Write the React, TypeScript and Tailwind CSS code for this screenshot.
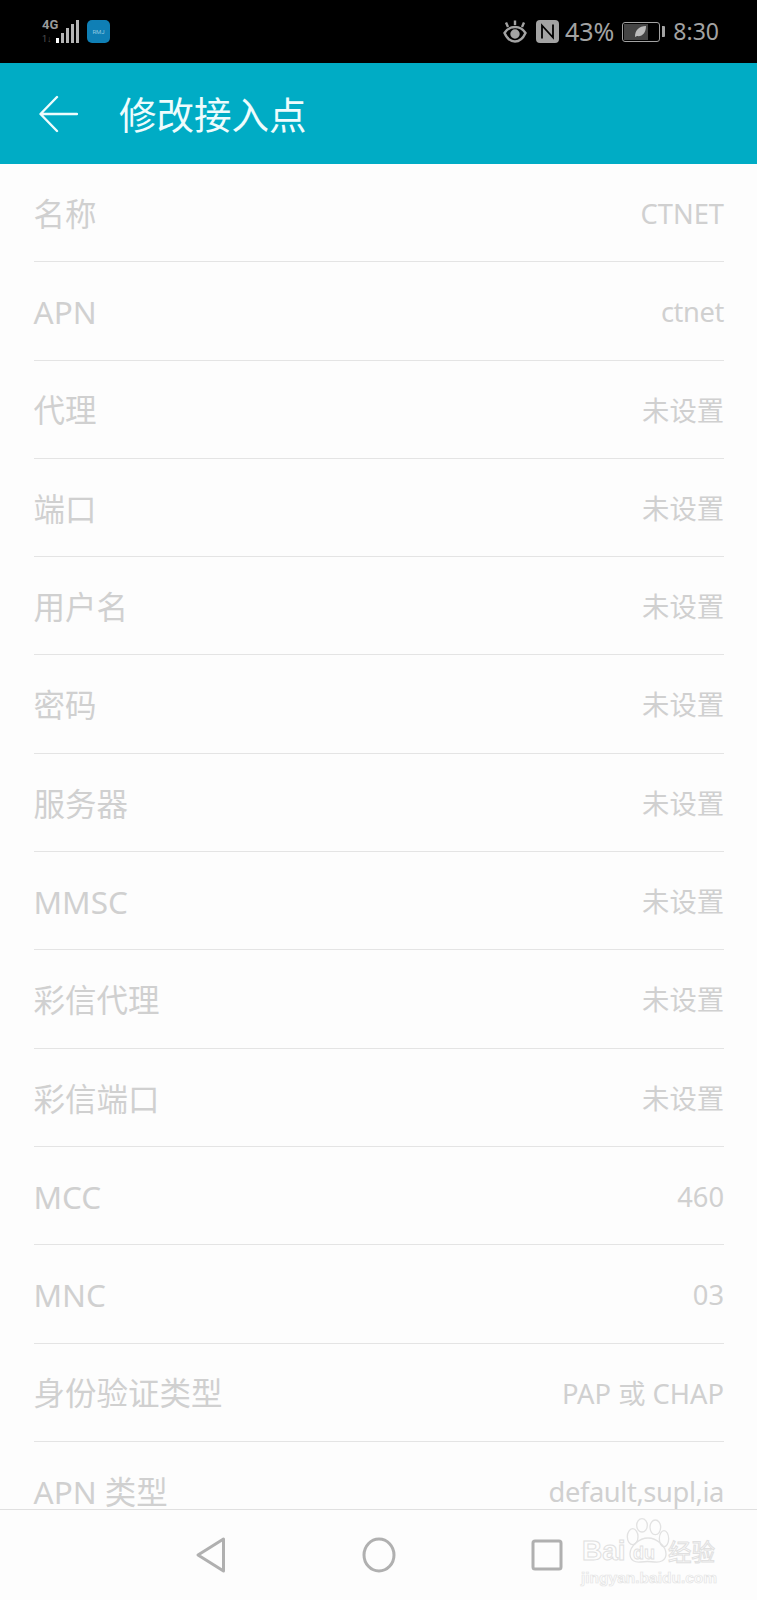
const sans = "font-['Noto_Sans','Noto_Sans_CJK_SC',sans-serif]";

const rows = [
  { label: "名称", value: "CTNET" },
  { label: "APN", value: "ctnet", tight: true },
  { label: "代理", value: "未设置" },
  { label: "端口", value: "未设置" },
  { label: "用户名", value: "未设置" },
  { label: "密码", value: "未设置" },
  { label: "服务器", value: "未设置" },
  { label: "MMSC", value: "未设置" },
  { label: "彩信代理", value: "未设置" },
  { label: "彩信端口", value: "未设置" },
  { label: "MCC", value: "460" },
  { label: "MNC", value: "03" },
  { label: "身份验证类型", value: "PAP 或 CHAP" },
  { label: "APN 类型", value: "default,supl,ia", tight: true },
];

function StatusBar() {
  return (
    <div className="flex h-[63px] shrink-0 items-center justify-between bg-black pl-[41px] pr-[38px] text-[#a3a3a3]">
      <div className="flex items-center gap-[8px]">
        <div className="relative h-[23px] w-[38px]">
          <span className="absolute left-[1px] top-[-2px] font-['Roboto',sans-serif] text-[13px] font-bold leading-[14px] text-[#9a9a9a]">4G</span>
          <span className="absolute left-[1px] top-[15px] font-['Roboto',sans-serif] text-[9px] leading-[9px] text-[#555]">1↓</span>
          <div className="absolute bottom-0 right-0 flex items-end gap-[2px]">
            <span className="h-[5px] w-[3px] bg-white" />
            <span className="h-[10px] w-[3px] bg-[#b5b5b5]" />
            <span className="h-[15px] w-[3px] bg-[#b5b5b5]" />
            <span className="h-[19px] w-[3px] bg-[#b5b5b5]" />
            <span className="h-[23px] w-[3px] bg-[#b5b5b5]" />
          </div>
        </div>
        <div className="flex h-[23px] w-[23px] items-center justify-center rounded-[5px] bg-[#0f7fb5] font-['Roboto',sans-serif] text-[6px] text-[#8ec6e0]">
          RMJ
        </div>
      </div>
      <div className="flex items-center">
        <svg width="24" height="23" viewBox="0 0 24 23" fill="none" stroke="#a3a3a3" strokeWidth="2.4">
          <path d="M1.500 13C4 9 8 7 12 7s8 2 10.500 6C20 18.500 16 21.500 12 21.500S4 18.500 1.500 13z" />
          <circle cx="12" cy="14" r="3.500" fill="#a3a3a3" />
          <path d="M5 7 3 2.500M12 5V0.500M19 7l2-4.500" />
        </svg>
        <svg className="ml-[9px]" width="23" height="23" viewBox="0 0 23 23">
          <rect width="23" height="23" rx="4" fill="#a3a3a3" />
          <path d="M6 18.500V5.500l11 12V4.500" fill="none" stroke="#000" strokeWidth="1.800" />
        </svg>
        <span className={`ml-[6px] text-[25px] leading-none ${sans}`}>43%</span>
        <div className="ml-[8px] flex items-center gap-[2px]">
          <div className="flex h-[20px] w-[38px] rounded-[3px] border border-[#a3a3a3] p-[1px]">
            <div className="flex h-full w-[24px] items-center justify-end bg-[#444] pr-[1px]">
              <svg width="13" height="13" viewBox="0 0 13 13">
                <path d="M1 12C1 5 5 1 12 1c0 7-4 11-9 10z" fill="#bbb" />
              </svg>
            </div>
          </div>
          <span className="h-[11px] w-[3px] rounded-r-[1px] bg-[#a3a3a3]" />
        </div>
        <span className={`ml-[8px] text-[23px] leading-none ${sans}`}>8:30</span>
      </div>
    </div>
  );
}

function Header() {
  return (
    <header className="flex h-[101px] shrink-0 items-center bg-[#00acc5] pl-[39px] text-[#eefcfd]">
      <svg width="39" height="38" viewBox="0 0 39 38" fill="none" stroke="currentColor" strokeWidth="2.400" strokeLinecap="round" strokeLinejoin="round">
        <path d="M18 2 1.500 19 18 36M2 19h36" />
      </svg>
      <h1 className={`ml-[41px] pt-[2px] text-[37.5px] leading-none ${sans}`}>修改接入点</h1>
    </header>
  );
}

function NavBar() {
  return (
    <nav className="relative flex h-[91px] shrink-0 items-center border-t border-[#e0e0e0] bg-[#fdfdfd] pl-[195px]">
      <svg width="32" height="36" viewBox="0 0 32 36" fill="none" stroke="#b0b0b0" strokeWidth="3" strokeLinejoin="round">
        <path d="M28.500 2v32L3 18z" />
      </svg>
      <svg className="ml-[135px]" width="34" height="36" viewBox="0 0 34 36" fill="none" stroke="#b0b0b0" strokeWidth="3">
        <ellipse cx="17" cy="18" rx="15" ry="16" />
      </svg>
      <svg className="ml-[135px]" width="32" height="32" viewBox="0 0 32 32" fill="none" stroke="#b0b0b0" strokeWidth="3">
        <rect x="2" y="2" width="28" height="28" rx="2" />
      </svg>

      <div className="absolute left-[581px] top-[8px] h-[80px] w-[150px]">
        <svg className="absolute left-[45px] top-0" width="44" height="46" viewBox="0 0 66 69" fill="none" stroke="#e2e2e2" strokeWidth="2">
          <ellipse cx="24" cy="11" rx="8" ry="10" />
          <ellipse cx="44" cy="14" rx="8" ry="11" />
          <ellipse cx="10" cy="28" rx="8" ry="12" />
          <ellipse cx="57" cy="31" rx="7" ry="12" />
          <path d="M6 54c0-12 14-24 27-24s27 12 27 24c0 10-9 13-17 12-7-1-14-1-21 0-8 1-16-2-16-12z" />
        </svg>
        <span className="absolute left-[1px] top-[17px] font-['Liberation_Sans',sans-serif] text-[28px] font-bold leading-[32px] text-transparent [-webkit-text-stroke:1px_#e0e0e0]">
          Bai
        </span>
        <span className="absolute left-[52px] top-[25px] font-['Liberation_Sans',sans-serif] text-[18px] font-bold leading-[20px] text-transparent [-webkit-text-stroke:0.8px_#e0e0e0]">
          du
        </span>
        <span className="absolute left-[87px] top-[18px] font-['Noto_Sans_CJK_SC',sans-serif] text-[23.5px] leading-[30px] text-transparent [-webkit-text-stroke:1px_#e0e0e0]">
          经验
        </span>
        <span className="absolute left-0 top-[51px] font-['Liberation_Sans',sans-serif] text-[15.500px] font-bold leading-[18px] text-transparent [-webkit-text-stroke:0.7px_#e4e4e4]">
          jingyan.baidu.com
        </span>
      </div>
    </nav>
  );
}

export default function App() {
  return (
    <div className={`flex h-[1600px] w-[757px] flex-col overflow-hidden bg-[#fdfdfd] ${sans}`}>
      <StatusBar />
      <Header />
      <main className="min-h-0 flex-1 overflow-hidden pl-[33.500px] pr-[33px]">
        {rows.map((row) => (
          <div key={row.label} className="flex h-[98.3px] items-center justify-between border-b border-[#e4e4e4] pt-[2px]">
            <span className="text-[31.500px] leading-none text-[#d0d0d0]">{row.label}</span>
            <span className={row.tight ? "text-[27.300px] leading-none tracking-[-0.4px] text-[#d0d0d0]" : "text-[27.300px] leading-none text-[#d0d0d0]"}>
              {row.value}
            </span>
          </div>
        ))}
      </main>
      <NavBar />
    </div>
  );
}
